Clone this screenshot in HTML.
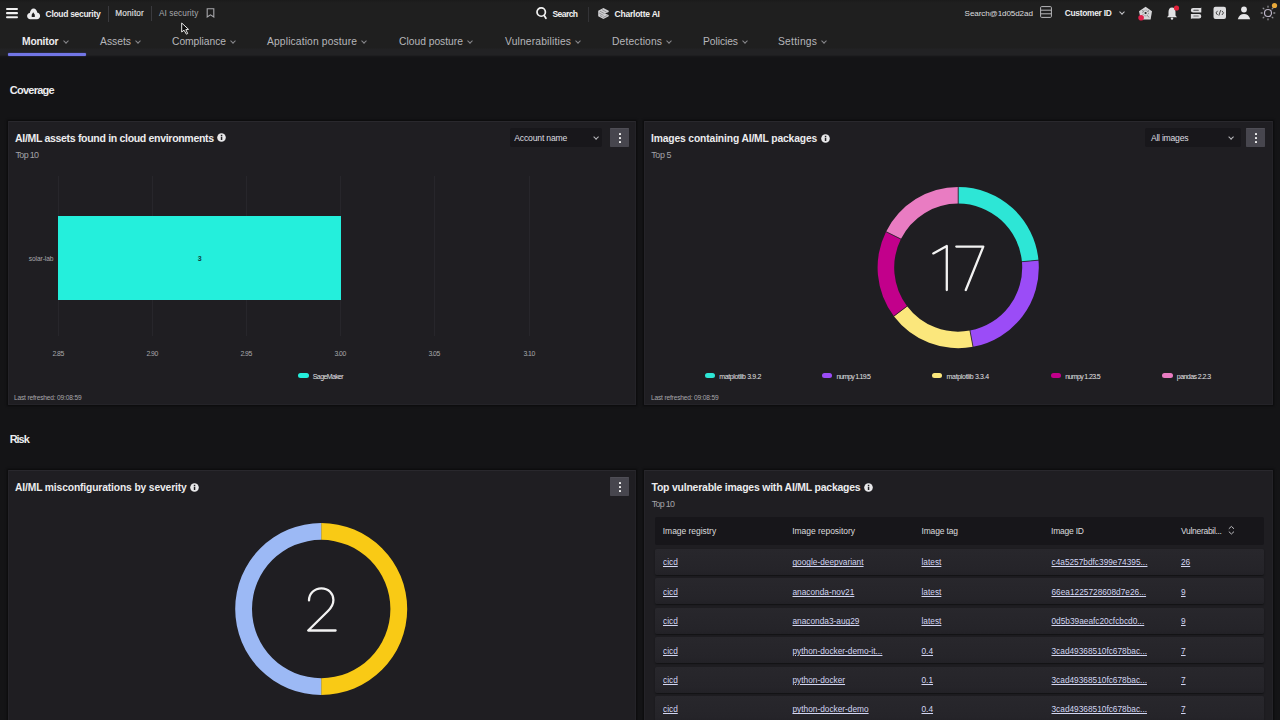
<!DOCTYPE html>
<html><head><meta charset="utf-8">
<style>
*{margin:0;padding:0;box-sizing:border-box}
html,body{width:1280px;height:720px;overflow:hidden;background:#141416;font-family:"Liberation Sans",sans-serif;color:#e6e6e8}
.a{position:absolute;white-space:nowrap}
.p{position:absolute;background:#1f1e22;border:1px solid #242328;border-top-color:#29282d;box-shadow:0 0 2px 1px rgba(0,0,0,.5)}
.chev{position:absolute;width:4px;height:4px;border-right:1px solid #8a8a8e;border-bottom:1px solid #8a8a8e;transform:rotate(45deg)}
.kebab{position:absolute;width:19.4px;height:18.6px;background:#47464e;border-radius:0.8px;border-top:1px solid #4f4e56}
.kebab i{position:absolute;left:8.5px;width:2px;height:2px;border-radius:0.6px;background:#eee}
.dd{position:absolute;background:#18171b;border-radius:2px}
.sw{position:absolute;width:10.5px;height:5px;border-radius:2.5px}
.grid{position:absolute;top:176px;width:1px;height:160px;background:#27262b}
.row{position:absolute;left:655px;width:609px;height:26px;background:linear-gradient(#28272c,#252429 80%,#222126);border-radius:2px;box-shadow:0 1px 1.5px rgba(0,0,0,.45)}
</style></head><body>
<div class="a" style="left:0;top:0;width:1280px;height:56px;background:linear-gradient(#1b1b1b 0px,#1f1f1f 3px,#1f1f1f 48px,#222224 49px,#222224 55px,#1a1a1c 56px)"></div>
<div class="a" style="left:0;top:56px;width:1280px;height:2px;background:linear-gradient(#18181a,#141416)"></div>

<svg class="a" style="left:6px;top:7px" width="12" height="12" viewBox="0 0 12 12"><rect x="0" y="0.9" width="12" height="2.1" rx="1" fill="#f0f0f0"/><rect x="0" y="5.05" width="12" height="2.1" rx="1" fill="#f0f0f0"/><rect x="0" y="9.25" width="12" height="2.1" rx="1" fill="#f0f0f0"/></svg>
<svg class="a" style="left:27px;top:7.5px" width="14" height="12" viewBox="0 0 14 12"><path d="M3.3 11.2 C1.5 11.2 0.1 9.8 0.1 8 C0.1 6.4 1.2 5.1 2.8 4.9 C3.3 2.3 4.7 0.4 6.6 0.4 C8.5 0.4 10 2.3 10.4 4.8 C12 5 13.1 6.3 13.1 8 C13.1 9.8 11.8 11.2 10 11.2 Z" fill="#ececee"/><path d="M6.2 4.3 L7.8 6.8 V9 H4.7 V6.8 Z" fill="#1f1f1f"/></svg>
<div class="a" style="left:45.60px;top:9.60px;font-size:8.50px;line-height:8.50px;letter-spacing:-0.305px;color:#ececee;font-weight:bold;">Cloud security</div>
<div class="a" style="left:108px;top:6px;width:1px;height:16px;background:#3a3a3e"></div>
<div class="a" style="left:115.30px;top:9.53px;font-size:8.23px;line-height:8.23px;letter-spacing:0.193px;color:#dcdcde;-webkit-text-stroke:0.2px #dcdcde;">Monitor</div>
<div class="a" style="left:151px;top:6px;width:1px;height:15px;background:#3a3a3e"></div>
<div class="a" style="left:158.90px;top:9.53px;font-size:8.23px;line-height:8.23px;letter-spacing:0.098px;color:#a8a8ac;">AI security</div>
<svg class="a" style="left:206px;top:8px" width="9" height="10" viewBox="0 0 9 10"><path d="M1.2 0.8 H7.8 V9 L4.5 6.8 L1.2 9 Z" fill="none" stroke="#a8a8ac" stroke-width="1.1"/></svg>
<svg class="a" style="left:179px;top:21px" width="12" height="15" viewBox="0 0 12 15"><path d="M2.7 2 L2.7 11 L5 9.2 L7.4 13.2 L8.7 12.5 L6.8 8.6 L9.6 8.4 Z" fill="#0c0c0c" stroke="#e8e8e8" stroke-width="1" stroke-linejoin="round"/></svg>
<svg class="a" style="left:535px;top:6px" width="13" height="14" viewBox="0 0 13 14"><circle cx="6.2" cy="6.05" r="4.2" fill="none" stroke="#f2f2f2" stroke-width="1.7"/><path d="M9.3 9.6 L10.9 12.2" stroke="#f2f2f2" stroke-width="1.8" stroke-linecap="round"/></svg>
<div class="a" style="left:552.50px;top:9.60px;font-size:8.50px;line-height:8.50px;letter-spacing:-0.573px;color:#f0f0f0;font-weight:bold;">Search</div>
<div class="a" style="left:588px;top:7px;width:1px;height:15px;background:#333336"></div>
<svg class="a" style="left:597px;top:7px" width="13" height="13" viewBox="0 0 13 13"><path d="M6.4 1 L11.7 3.8 V5 L8 6.5 L11.7 8 V9.2 L6.4 12 L1.2 9.2 V3.8 Z" fill="#cfcfd1"/><path d="M3 4.2 L7.5 6.6 M2.2 6 L6.5 8.4 M3 8.5 L5.5 9.9 M5 2.6 L9.5 5 M6 10.5 L10.5 8.3" stroke="#76767a" stroke-width="0.7"/></svg>
<div class="a" style="left:614.50px;top:9.60px;font-size:8.50px;line-height:8.50px;letter-spacing:-0.216px;color:#f0f0f0;font-weight:bold;">Charlotte AI</div>
<div class="a" style="left:964.60px;top:9.95px;font-size:8.09px;line-height:8.09px;letter-spacing:-0.104px;color:#dcdcde;">Search@1d05d2ad</div>
<svg class="a" style="left:1040px;top:6px" width="12" height="12" viewBox="0 0 12 12"><rect x="0.6" y="0.6" width="10.8" height="10.8" rx="1" fill="none" stroke="#b8b8bb" stroke-width="1"/><path d="M0.6 4.2 H11.4 M0.6 7.8 H11.4" stroke="#b8b8bb" stroke-width="1"/></svg>
<div class="a" style="left:1064.70px;top:8.82px;font-size:8.37px;line-height:8.37px;letter-spacing:-0.265px;color:#ececee;font-weight:bold;">Customer ID</div>
<div class="chev" style="left:1119.5px;top:9.5px;border-color:#c8c8cc"></div>
<svg class="a" style="left:1138px;top:6px" width="15" height="16" viewBox="0 0 15 16"><path d="M7.6 0.75 L14 5.3 L12.6 13.4 H2.8 L1 5.3 Z" fill="#d6d6d8"/><circle cx="7.6" cy="7" r="1.1" fill="#222"/><circle cx="7.6" cy="7" r="2.9" fill="none" stroke="#7a7a7c" stroke-width="0.8" stroke-dasharray="1.2 1"/><path d="M4 4.5 L6 5.5 M11 4.5 L9.2 5.5 M9.5 9.5 L11 11.5" stroke="#666" stroke-width="0.7"/><circle cx="3.1" cy="11.7" r="2.8" fill="#e0214a"/></svg>
<svg class="a" style="left:1166px;top:5px" width="14" height="15" viewBox="0 0 14 15"><path d="M6 2.5 C3.6 2.5 2.5 4.6 2.5 7 V10.5 L1 12.3 H11 L9.5 10.5 V7 C9.5 4.6 8.4 2.5 6 2.5 Z" fill="#e2e2e4"/><circle cx="6" cy="13.6" r="1.2" fill="#e2e2e4"/><circle cx="10.5" cy="3" r="2.6" fill="#e0213a"/></svg>
<svg class="a" style="left:1189px;top:6px" width="14" height="14" viewBox="0 0 14 14"><path d="M12.3 1.6 V6.5 H4.1 A2.25 2.25 0 0 1 4.1 2 H11.6 Z" fill="#dcdcde"/><rect x="4.3" y="3.7" width="5.5" height="1" rx="0.5" fill="#4a4a4c"/><path d="M1.9 13.2 V8 H10.1 A2.2 2.2 0 0 1 10.1 12.4 H2.6 Z" fill="#dcdcde"/><rect x="4.3" y="9.6" width="5.5" height="1" rx="0.5" fill="#6a6a6c"/></svg>
<svg class="a" style="left:1213px;top:6px" width="14" height="14" viewBox="0 0 14 14"><rect x="0.5" y="0.8" width="12.5" height="12.2" rx="2" fill="#dcdcde"/><path d="M4.6 4.8 L3 6.9 L4.6 9 M8.9 4.8 L10.5 6.9 L8.9 9 M7.6 4.2 L5.9 9.6" fill="none" stroke="#333" stroke-width="0.9"/></svg>
<svg class="a" style="left:1237px;top:6px" width="14" height="14" viewBox="0 0 14 14"><circle cx="7" cy="3.5" r="2.9" fill="#e6e6e8"/><path d="M0.8 13.2 C1.6 9.8 4 8 7 8 C10 8 12.4 9.8 13.2 13.2 Z" fill="#e6e6e8"/></svg>
<svg class="a" style="left:1259px;top:2px" width="21" height="20" viewBox="0 0 21 20"><circle cx="9" cy="11" r="3.5" fill="none" stroke="#bdb6c8" stroke-width="1.2"/><g stroke="#8d8d92" stroke-width="1.3" stroke-linecap="round"><path d="M9 4.2 V5.2 M9 16.8 V17.8 M2.2 11 H3.2 M14.8 11 H15.8 M4.2 6.2 L4.9 6.9 M13.1 15.1 L13.8 15.8 M4.2 15.8 L4.9 15.1 M13.1 6.9 L13.8 6.2"/></g><circle cx="15.5" cy="3.5" r="2.6" fill="#e8a93a"/></svg>
<div class="a" style="left:22.00px;top:36.79px;font-size:10.29px;line-height:10.29px;letter-spacing:-0.185px;color:#ececee;font-weight:bold;">Monitor</div>
<div class="chev" style="left:63.8px;top:39px"></div>
<div class="a" style="left:100.00px;top:36.79px;font-size:10.29px;line-height:10.29px;letter-spacing:0.025px;color:#b6b6ba;">Assets</div>
<div class="chev" style="left:136.2px;top:39px"></div>
<div class="a" style="left:172.00px;top:36.79px;font-size:10.29px;line-height:10.29px;letter-spacing:-0.036px;color:#b6b6ba;">Compliance</div>
<div class="chev" style="left:231.2px;top:39px"></div>
<div class="a" style="left:267.00px;top:36.79px;font-size:10.29px;line-height:10.29px;letter-spacing:0.139px;color:#b6b6ba;">Application posture</div>
<div class="chev" style="left:362.2px;top:39px"></div>
<div class="a" style="left:399.00px;top:36.79px;font-size:10.29px;line-height:10.29px;letter-spacing:-0.004px;color:#b6b6ba;">Cloud posture</div>
<div class="chev" style="left:468.2px;top:39px"></div>
<div class="a" style="left:505.00px;top:36.79px;font-size:10.29px;line-height:10.29px;letter-spacing:0.167px;color:#b6b6ba;">Vulnerabilities</div>
<div class="chev" style="left:576.2px;top:39px"></div>
<div class="a" style="left:612.00px;top:36.79px;font-size:10.29px;line-height:10.29px;letter-spacing:0.155px;color:#b6b6ba;">Detections</div>
<div class="chev" style="left:667.2px;top:39px"></div>
<div class="a" style="left:703.00px;top:36.79px;font-size:10.29px;line-height:10.29px;letter-spacing:-0.064px;color:#b6b6ba;">Policies</div>
<div class="chev" style="left:743.2px;top:39px"></div>
<div class="a" style="left:778.00px;top:36.79px;font-size:10.29px;line-height:10.29px;letter-spacing:0.261px;color:#b6b6ba;">Settings</div>
<div class="chev" style="left:822.2px;top:39px"></div>
<div class="a" style="left:7.5px;top:53px;width:78px;height:2.5px;background:#7276e6;border-radius:1px;box-shadow:0 0 1.5px rgba(90,95,230,.6)"></div>
<div class="a" style="left:9.70px;top:84.81px;font-size:10.97px;line-height:10.97px;letter-spacing:-0.716px;color:#ececee;font-weight:bold;">Coverage</div>
<div class="a" style="left:9.70px;top:433.81px;font-size:10.97px;line-height:10.97px;letter-spacing:-1.026px;color:#ececee;font-weight:bold;">Risk</div>
<div class="p" style="left:7.5px;top:121px;width:628.5px;height:283.5px"></div>
<div class="a" style="left:15.00px;top:133.26px;font-size:10.56px;line-height:10.56px;letter-spacing:-0.329px;color:#ececee;font-weight:bold;">AI/ML assets found in cloud environments</div>
<svg class="a" style="left:216.9px;top:133.2px" width="9" height="9" viewBox="0 0 9 9"><circle cx="4.5" cy="4.5" r="4.3" fill="#e8e8ea"/><rect x="3.8" y="3.7" width="1.5" height="3.3" fill="#1f1e22"/><rect x="3.8" y="1.8" width="1.5" height="1.3" fill="#1f1e22"/></svg>
<div class="a" style="left:15.60px;top:150.95px;font-size:8.92px;line-height:8.92px;letter-spacing:-0.674px;color:#a3a3a8;">Top 10</div>
<div class="dd" style="left:509.6px;top:127.8px;width:92.6px;height:19.2px"></div><div class="a" style="left:514.30px;top:134.28px;font-size:8.64px;line-height:8.64px;letter-spacing:-0.186px;color:#dedee0;">Account name</div><div class="chev" style="left:593.6px;top:135.3px;width:4.2px;height:4.2px;border-color:#b8b8bc"></div>
<div class="kebab" style="left:610px;top:128px"><i style="top:3.6px"></i><i style="top:7.8px"></i><i style="top:12px"></i></div>
<div class="grid" style="left:58px"></div>
<div class="grid" style="left:152px"></div>
<div class="grid" style="left:246px"></div>
<div class="grid" style="left:340px"></div>
<div class="grid" style="left:434px"></div>
<div class="grid" style="left:529px"></div>
<div class="a" style="left:58px;top:216px;width:283px;height:84px;background:#24efdc"></div>
<div class="a" style="left:197.80px;top:255.47px;font-size:7.00px;line-height:7.00px;letter-spacing:0.000px;color:#0f3f3c;font-weight:bold;">3</div>
<div class="a" style="left:28.70px;top:255.61px;font-size:6.60px;line-height:6.60px;letter-spacing:-0.064px;color:#a8a8ac;">solar-lab</div>
<div class="a" style="left:52.40px;top:351.49px;font-size:6.86px;line-height:6.86px;letter-spacing:-0.516px;color:#a8a8ac;">2.85</div>
<div class="a" style="left:146.40px;top:351.49px;font-size:6.86px;line-height:6.86px;letter-spacing:-0.516px;color:#a8a8ac;">2.90</div>
<div class="a" style="left:240.40px;top:351.49px;font-size:6.86px;line-height:6.86px;letter-spacing:-0.516px;color:#a8a8ac;">2.95</div>
<div class="a" style="left:334.40px;top:351.49px;font-size:6.86px;line-height:6.86px;letter-spacing:-0.516px;color:#a8a8ac;">3.00</div>
<div class="a" style="left:428.40px;top:351.49px;font-size:6.86px;line-height:6.86px;letter-spacing:-0.516px;color:#a8a8ac;">3.05</div>
<div class="a" style="left:523.40px;top:351.49px;font-size:6.86px;line-height:6.86px;letter-spacing:-0.516px;color:#a8a8ac;">3.10</div>
<div class="sw" style="left:298px;top:373.4px;background:#24efdc"></div>
<div class="a" style="left:312.80px;top:372.67px;font-size:7.00px;line-height:7.00px;letter-spacing:-0.612px;color:#e2e2e4;">SageMaker</div>
<div class="a" style="left:14.00px;top:394.51px;font-size:6.60px;line-height:6.60px;letter-spacing:-0.171px;color:#a8a8ac;">Last refreshed: 09:08:59</div>
<div class="p" style="left:643.5px;top:121px;width:629px;height:283.5px"></div>
<div class="a" style="left:651.00px;top:133.69px;font-size:10.29px;line-height:10.29px;letter-spacing:-0.131px;color:#ececee;font-weight:bold;">Images containing AI/ML packages</div>
<svg class="a" style="left:820.5px;top:133.6px" width="9" height="9" viewBox="0 0 9 9"><circle cx="4.5" cy="4.5" r="4.3" fill="#e8e8ea"/><rect x="3.8" y="3.7" width="1.5" height="3.3" fill="#1f1e22"/><rect x="3.8" y="1.8" width="1.5" height="1.3" fill="#1f1e22"/></svg>
<div class="a" style="left:651.30px;top:150.95px;font-size:8.92px;line-height:8.92px;letter-spacing:-0.403px;color:#a3a3a8;">Top 5</div>
<div class="dd" style="left:1145px;top:127.8px;width:96.2px;height:19.2px"></div><div class="a" style="left:1150.90px;top:134.28px;font-size:8.64px;line-height:8.64px;letter-spacing:-0.240px;color:#dedee0;">All images</div><div class="chev" style="left:1229.3px;top:135.3px;width:4.2px;height:4.2px;border-color:#b8b8bc"></div>
<div class="kebab" style="left:1246px;top:128px"><i style="top:3.6px"></i><i style="top:7.8px"></i><i style="top:12px"></i></div>
<div class="sw" style="left:704.7px;top:373.4px;background:#2de6d6"></div>
<div class="a" style="left:719.20px;top:372.67px;font-size:7.00px;line-height:7.00px;letter-spacing:-0.351px;color:#e2e2e4;">matplotlib 3.9.2</div>
<div class="sw" style="left:821.8px;top:373.4px;background:#9b4cf7"></div>
<div class="a" style="left:836.50px;top:372.67px;font-size:7.00px;line-height:7.00px;letter-spacing:-0.719px;color:#e2e2e4;">numpy 1.19.5</div>
<div class="sw" style="left:931.9px;top:373.4px;background:#fbe77c"></div>
<div class="a" style="left:946.60px;top:372.67px;font-size:7.00px;line-height:7.00px;letter-spacing:-0.325px;color:#e2e2e4;">matplotlib 3.3.4</div>
<div class="sw" style="left:1050.5px;top:373.4px;background:#c2008b"></div>
<div class="a" style="left:1065.20px;top:372.67px;font-size:7.00px;line-height:7.00px;letter-spacing:-0.628px;color:#e2e2e4;">numpy 1.23.5</div>
<div class="sw" style="left:1162px;top:373.4px;background:#e97cc2"></div>
<div class="a" style="left:1176.80px;top:372.67px;font-size:7.00px;line-height:7.00px;letter-spacing:-0.552px;color:#e2e2e4;">pandas 2.2.3</div>
<div class="a" style="left:651.00px;top:394.51px;font-size:6.60px;line-height:6.60px;letter-spacing:-0.171px;color:#a8a8ac;">Last refreshed: 09:08:59</div>
<div class="p" style="left:7.5px;top:469.6px;width:628.5px;height:260px"></div>
<div class="a" style="left:15.00px;top:483.19px;font-size:10.29px;line-height:10.29px;letter-spacing:-0.134px;color:#ececee;font-weight:bold;">AI/ML misconfigurations by severity</div>
<svg class="a" style="left:190px;top:483.3px" width="9" height="9" viewBox="0 0 9 9"><circle cx="4.5" cy="4.5" r="4.3" fill="#e8e8ea"/><rect x="3.8" y="3.7" width="1.5" height="3.3" fill="#1f1e22"/><rect x="3.8" y="1.8" width="1.5" height="1.3" fill="#1f1e22"/></svg>
<div class="kebab" style="left:610px;top:477px"><i style="top:3.6px"></i><i style="top:7.8px"></i><i style="top:12px"></i></div>
<div class="p" style="left:643.5px;top:469.6px;width:629px;height:260px"></div>
<div class="a" style="left:651.50px;top:482.68px;font-size:10.43px;line-height:10.43px;letter-spacing:-0.196px;color:#ececee;font-weight:bold;">Top vulnerable images with AI/ML packages</div>
<svg class="a" style="left:863.5px;top:483px" width="9" height="9" viewBox="0 0 9 9"><circle cx="4.5" cy="4.5" r="4.3" fill="#e8e8ea"/><rect x="3.8" y="3.7" width="1.5" height="3.3" fill="#1f1e22"/><rect x="3.8" y="1.8" width="1.5" height="1.3" fill="#1f1e22"/></svg>
<div class="a" style="left:651.80px;top:500.45px;font-size:8.92px;line-height:8.92px;letter-spacing:-0.714px;color:#a3a3a8;">Top 10</div>
<div class="a" style="left:654.5px;top:516.5px;width:609px;height:28px;background:#17161a;border-radius:2px"></div>
<div class="a" style="left:662.80px;top:527.40px;font-size:8.50px;line-height:8.50px;letter-spacing:-0.037px;color:#dcdcde;">Image registry</div>
<div class="a" style="left:792.20px;top:527.40px;font-size:8.50px;line-height:8.50px;letter-spacing:-0.036px;color:#dcdcde;">Image repository</div>
<div class="a" style="left:921.50px;top:527.40px;font-size:8.50px;line-height:8.50px;letter-spacing:-0.165px;color:#dcdcde;">Image tag</div>
<div class="a" style="left:1051.00px;top:527.40px;font-size:8.50px;line-height:8.50px;letter-spacing:-0.215px;color:#dcdcde;">Image ID</div>
<div class="a" style="left:1181.00px;top:527.40px;font-size:8.50px;line-height:8.50px;letter-spacing:-0.300px;color:#dcdcde;">Vulnerabil...</div>
<svg class="a" style="left:1227px;top:524px" width="9" height="12" viewBox="0 0 9 12"><path d="M1.8 4.8 L4.4 2.4 L7 4.8 M1.8 7.6 L4.4 10 L7 7.6" fill="none" stroke="#bdbdc1" stroke-width="1"/></svg>
<div class="row" style="top:549.0px"></div>
<div class="a" style="left:663.00px;top:558.47px;font-size:8.30px;line-height:8.30px;letter-spacing:0.000px;color:#d3d6f2;text-decoration:underline;">cicd</div>
<div class="a" style="left:792.50px;top:558.47px;font-size:8.30px;line-height:8.30px;letter-spacing:0.000px;color:#d3d6f2;text-decoration:underline;">google-deepvariant</div>
<div class="a" style="left:921.50px;top:558.47px;font-size:8.30px;line-height:8.30px;letter-spacing:0.000px;color:#d3d6f2;text-decoration:underline;">latest</div>
<div class="a" style="left:1051.50px;top:558.47px;font-size:8.30px;line-height:8.30px;letter-spacing:0.000px;color:#d3d6f2;text-decoration:underline;">c4a5257bdfc399e74395...</div>
<div class="a" style="left:1181.00px;top:558.47px;font-size:8.30px;line-height:8.30px;letter-spacing:0.000px;color:#d3d6f2;text-decoration:underline;">26</div>
<div class="row" style="top:578.4px"></div>
<div class="a" style="left:663.00px;top:587.87px;font-size:8.30px;line-height:8.30px;letter-spacing:0.000px;color:#d3d6f2;text-decoration:underline;">cicd</div>
<div class="a" style="left:792.50px;top:587.87px;font-size:8.30px;line-height:8.30px;letter-spacing:0.000px;color:#d3d6f2;text-decoration:underline;">anaconda-nov21</div>
<div class="a" style="left:921.50px;top:587.87px;font-size:8.30px;line-height:8.30px;letter-spacing:0.000px;color:#d3d6f2;text-decoration:underline;">latest</div>
<div class="a" style="left:1051.50px;top:587.87px;font-size:8.30px;line-height:8.30px;letter-spacing:0.000px;color:#d3d6f2;text-decoration:underline;">66ea1225728608d7e26...</div>
<div class="a" style="left:1181.00px;top:587.87px;font-size:8.30px;line-height:8.30px;letter-spacing:0.000px;color:#d3d6f2;text-decoration:underline;">9</div>
<div class="row" style="top:607.8px"></div>
<div class="a" style="left:663.00px;top:617.27px;font-size:8.30px;line-height:8.30px;letter-spacing:0.000px;color:#d3d6f2;text-decoration:underline;">cicd</div>
<div class="a" style="left:792.50px;top:617.27px;font-size:8.30px;line-height:8.30px;letter-spacing:0.000px;color:#d3d6f2;text-decoration:underline;">anaconda3-aug29</div>
<div class="a" style="left:921.50px;top:617.27px;font-size:8.30px;line-height:8.30px;letter-spacing:0.000px;color:#d3d6f2;text-decoration:underline;">latest</div>
<div class="a" style="left:1051.50px;top:617.27px;font-size:8.30px;line-height:8.30px;letter-spacing:0.000px;color:#d3d6f2;text-decoration:underline;">0d5b39aeafc20cfcbcd0...</div>
<div class="a" style="left:1181.00px;top:617.27px;font-size:8.30px;line-height:8.30px;letter-spacing:0.000px;color:#d3d6f2;text-decoration:underline;">9</div>
<div class="row" style="top:637.2px"></div>
<div class="a" style="left:663.00px;top:646.67px;font-size:8.30px;line-height:8.30px;letter-spacing:0.000px;color:#d3d6f2;text-decoration:underline;">cicd</div>
<div class="a" style="left:792.50px;top:646.67px;font-size:8.30px;line-height:8.30px;letter-spacing:0.000px;color:#d3d6f2;text-decoration:underline;">python-docker-demo-it...</div>
<div class="a" style="left:921.50px;top:646.67px;font-size:8.30px;line-height:8.30px;letter-spacing:0.000px;color:#d3d6f2;text-decoration:underline;">0.4</div>
<div class="a" style="left:1051.50px;top:646.67px;font-size:8.30px;line-height:8.30px;letter-spacing:0.000px;color:#d3d6f2;text-decoration:underline;">3cad49368510fc678bac...</div>
<div class="a" style="left:1181.00px;top:646.67px;font-size:8.30px;line-height:8.30px;letter-spacing:0.000px;color:#d3d6f2;text-decoration:underline;">7</div>
<div class="row" style="top:666.6px"></div>
<div class="a" style="left:663.00px;top:676.07px;font-size:8.30px;line-height:8.30px;letter-spacing:0.000px;color:#d3d6f2;text-decoration:underline;">cicd</div>
<div class="a" style="left:792.50px;top:676.07px;font-size:8.30px;line-height:8.30px;letter-spacing:0.000px;color:#d3d6f2;text-decoration:underline;">python-docker</div>
<div class="a" style="left:921.50px;top:676.07px;font-size:8.30px;line-height:8.30px;letter-spacing:0.000px;color:#d3d6f2;text-decoration:underline;">0.1</div>
<div class="a" style="left:1051.50px;top:676.07px;font-size:8.30px;line-height:8.30px;letter-spacing:0.000px;color:#d3d6f2;text-decoration:underline;">3cad49368510fc678bac...</div>
<div class="a" style="left:1181.00px;top:676.07px;font-size:8.30px;line-height:8.30px;letter-spacing:0.000px;color:#d3d6f2;text-decoration:underline;">7</div>
<div class="row" style="top:696.0px"></div>
<div class="a" style="left:663.00px;top:705.47px;font-size:8.30px;line-height:8.30px;letter-spacing:0.000px;color:#d3d6f2;text-decoration:underline;">cicd</div>
<div class="a" style="left:792.50px;top:705.47px;font-size:8.30px;line-height:8.30px;letter-spacing:0.000px;color:#d3d6f2;text-decoration:underline;">python-docker-demo</div>
<div class="a" style="left:921.50px;top:705.47px;font-size:8.30px;line-height:8.30px;letter-spacing:0.000px;color:#d3d6f2;text-decoration:underline;">0.4</div>
<div class="a" style="left:1051.50px;top:705.47px;font-size:8.30px;line-height:8.30px;letter-spacing:0.000px;color:#d3d6f2;text-decoration:underline;">3cad49368510fc678bac...</div>
<div class="a" style="left:1181.00px;top:705.47px;font-size:8.30px;line-height:8.30px;letter-spacing:0.000px;color:#d3d6f2;text-decoration:underline;">7</div>
<svg class="a" style="left:0;top:0" width="1280" height="720" viewBox="0 0 1280 720">
<path d="M958.20 187.00 A80.6 80.6 0 0 1 1038.46 260.16 L1021.93 261.69 A64 64 0 0 0 958.20 203.60 Z" fill="#2de6d6"/>
<path d="M1038.46 260.16 A80.6 80.6 0 0 1 973.01 346.83 L969.96 330.51 A64 64 0 0 0 1021.93 261.69 Z" fill="#9b4cf7"/>
<path d="M973.01 346.83 A80.6 80.6 0 0 1 893.88 316.17 L907.13 306.17 A64 64 0 0 0 969.96 330.51 Z" fill="#fbe77c"/>
<path d="M893.88 316.17 A80.6 80.6 0 0 1 886.05 231.67 L900.91 239.07 A64 64 0 0 0 907.13 306.17 Z" fill="#c2008b"/>
<path d="M886.05 231.67 A80.6 80.6 0 0 1 958.20 187.00 L958.20 203.60 A64 64 0 0 0 900.91 239.07 Z" fill="#e97cc2"/>
<path d="M958.20 186.00 L958.20 204.60" stroke="#1f1e22" stroke-width="0.8"/>
<path d="M1039.45 260.07 L1020.93 261.79" stroke="#1f1e22" stroke-width="0.8"/>
<path d="M973.19 347.81 L969.78 329.53" stroke="#1f1e22" stroke-width="0.8"/>
<path d="M893.08 316.77 L907.92 305.57" stroke="#1f1e22" stroke-width="0.8"/>
<path d="M885.15 231.23 L901.80 239.52" stroke="#1f1e22" stroke-width="0.8"/>
<path d="M321.2 523 A86 86 0 0 1 321.2 695 L321.2 678.2 A69.2 69.2 0 0 0 321.2 539.8 Z" fill="#f9ca15"/>
<path d="M321.2 523 A86 86 0 0 0 321.2 695 L321.2 678.2 A69.2 69.2 0 0 1 321.2 539.8 Z" fill="#9cb9f5"/>
<path d="M933.3 253.4 L946.8 246 V290" fill="none" stroke="#f2f2f2" stroke-width="2.3" stroke-linejoin="round" stroke-linecap="round"/>
<path d="M956.3 246.6 H983.3 L965.8 290" fill="none" stroke="#f2f2f2" stroke-width="2.3" stroke-linejoin="round" stroke-linecap="round"/>
<path d="M309 600.4 C309 593.5 314.5 588.3 321.4 588.3 C328.5 588.3 333.4 593.5 333.4 600 C333.4 604.5 331.5 607.5 328 611 L308.2 630.5 H335.6" fill="none" stroke="#f2f2f2" stroke-width="2.3" stroke-linejoin="round" stroke-linecap="round"/>
</svg>
</body></html>
